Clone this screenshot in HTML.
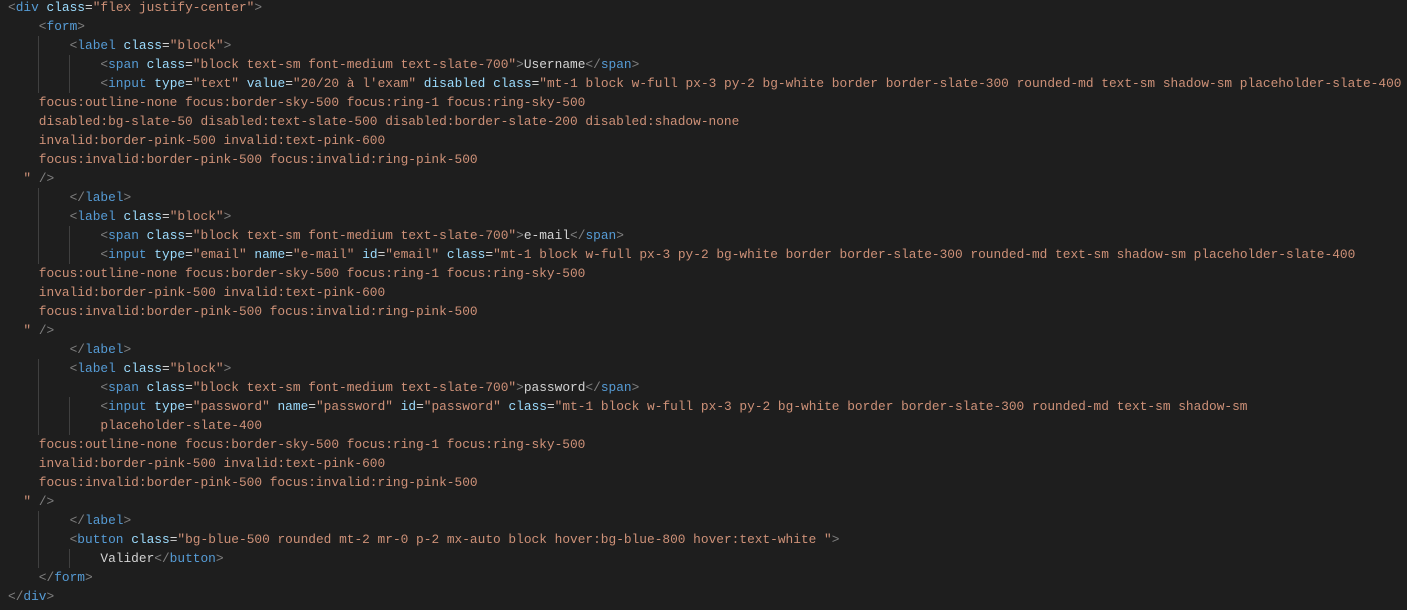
<!DOCTYPE html>
<html><head><meta charset="utf-8"><style>
html,body{margin:0;padding:0;background:#1e1e1e;width:1407px;height:610px;overflow:hidden}
pre{margin:0;position:absolute;left:8px;top:-2px;font-family:"Liberation Mono",monospace;font-size:12.83px;line-height:19px;color:#d4d4d4;white-space:pre}
.b{color:#808080}.t{color:#569cd6}.a{color:#9cdcfe}.s{color:#ce9178}
.g{position:absolute;width:1px;background:#404040}
</style></head><body>
<div class="g" style="left:38px;top:36px;height:57px"></div>
<div class="g" style="left:38px;top:188px;height:76px"></div>
<div class="g" style="left:38px;top:359px;height:76px"></div>
<div class="g" style="left:38px;top:511px;height:57px"></div>
<div class="g" style="left:69px;top:55px;height:38px"></div>
<div class="g" style="left:69px;top:226px;height:38px"></div>
<div class="g" style="left:69px;top:397px;height:38px"></div>
<div class="g" style="left:69px;top:549px;height:19px"></div>
<pre><span class="b">&lt;</span><span class="t">div</span> <span class="a">class</span>=<span class="s">"flex justify-center"</span><span class="b">&gt;</span>
    <span class="b">&lt;</span><span class="t">form</span><span class="b">&gt;</span>
        <span class="b">&lt;</span><span class="t">label</span> <span class="a">class</span>=<span class="s">"block"</span><span class="b">&gt;</span>
            <span class="b">&lt;</span><span class="t">span</span> <span class="a">class</span>=<span class="s">"block text-sm font-medium text-slate-700"</span><span class="b">&gt;</span>Username<span class="b">&lt;/</span><span class="t">span</span><span class="b">&gt;</span>
            <span class="b">&lt;</span><span class="t">input</span> <span class="a">type</span>=<span class="s">"text"</span> <span class="a">value</span>=<span class="s">"20/20 à l'exam"</span> <span class="a">disabled</span> <span class="a">class</span>=<span class="s">"mt-1 block w-full px-3 py-2 bg-white border border-slate-300 rounded-md text-sm shadow-sm placeholder-slate-400</span>
<span class="s">    focus:outline-none focus:border-sky-500 focus:ring-1 focus:ring-sky-500</span>
<span class="s">    disabled:bg-slate-50 disabled:text-slate-500 disabled:border-slate-200 disabled:shadow-none</span>
<span class="s">    invalid:border-pink-500 invalid:text-pink-600</span>
<span class="s">    focus:invalid:border-pink-500 focus:invalid:ring-pink-500</span>
<span class="s">  "</span> <span class="b">/&gt;</span>
        <span class="b">&lt;/</span><span class="t">label</span><span class="b">&gt;</span>
        <span class="b">&lt;</span><span class="t">label</span> <span class="a">class</span>=<span class="s">"block"</span><span class="b">&gt;</span>
            <span class="b">&lt;</span><span class="t">span</span> <span class="a">class</span>=<span class="s">"block text-sm font-medium text-slate-700"</span><span class="b">&gt;</span>e-mail<span class="b">&lt;/</span><span class="t">span</span><span class="b">&gt;</span>
            <span class="b">&lt;</span><span class="t">input</span> <span class="a">type</span>=<span class="s">"email"</span> <span class="a">name</span>=<span class="s">"e-mail"</span> <span class="a">id</span>=<span class="s">"email"</span> <span class="a">class</span>=<span class="s">"mt-1 block w-full px-3 py-2 bg-white border border-slate-300 rounded-md text-sm shadow-sm placeholder-slate-400</span>
<span class="s">    focus:outline-none focus:border-sky-500 focus:ring-1 focus:ring-sky-500</span>
<span class="s">    invalid:border-pink-500 invalid:text-pink-600</span>
<span class="s">    focus:invalid:border-pink-500 focus:invalid:ring-pink-500</span>
<span class="s">  "</span> <span class="b">/&gt;</span>
        <span class="b">&lt;/</span><span class="t">label</span><span class="b">&gt;</span>
        <span class="b">&lt;</span><span class="t">label</span> <span class="a">class</span>=<span class="s">"block"</span><span class="b">&gt;</span>
            <span class="b">&lt;</span><span class="t">span</span> <span class="a">class</span>=<span class="s">"block text-sm font-medium text-slate-700"</span><span class="b">&gt;</span>password<span class="b">&lt;/</span><span class="t">span</span><span class="b">&gt;</span>
            <span class="b">&lt;</span><span class="t">input</span> <span class="a">type</span>=<span class="s">"password"</span> <span class="a">name</span>=<span class="s">"password"</span> <span class="a">id</span>=<span class="s">"password"</span> <span class="a">class</span>=<span class="s">"mt-1 block w-full px-3 py-2 bg-white border border-slate-300 rounded-md text-sm shadow-sm</span>
<span class="s">            placeholder-slate-400</span>
<span class="s">    focus:outline-none focus:border-sky-500 focus:ring-1 focus:ring-sky-500</span>
<span class="s">    invalid:border-pink-500 invalid:text-pink-600</span>
<span class="s">    focus:invalid:border-pink-500 focus:invalid:ring-pink-500</span>
<span class="s">  "</span> <span class="b">/&gt;</span>
        <span class="b">&lt;/</span><span class="t">label</span><span class="b">&gt;</span>
        <span class="b">&lt;</span><span class="t">button</span> <span class="a">class</span>=<span class="s">"bg-blue-500 rounded mt-2 mr-0 p-2 mx-auto block hover:bg-blue-800 hover:text-white "</span><span class="b">&gt;</span>
            Valider<span class="b">&lt;/</span><span class="t">button</span><span class="b">&gt;</span>
    <span class="b">&lt;/</span><span class="t">form</span><span class="b">&gt;</span>
<span class="b">&lt;/</span><span class="t">div</span><span class="b">&gt;</span></pre>
</body></html>
